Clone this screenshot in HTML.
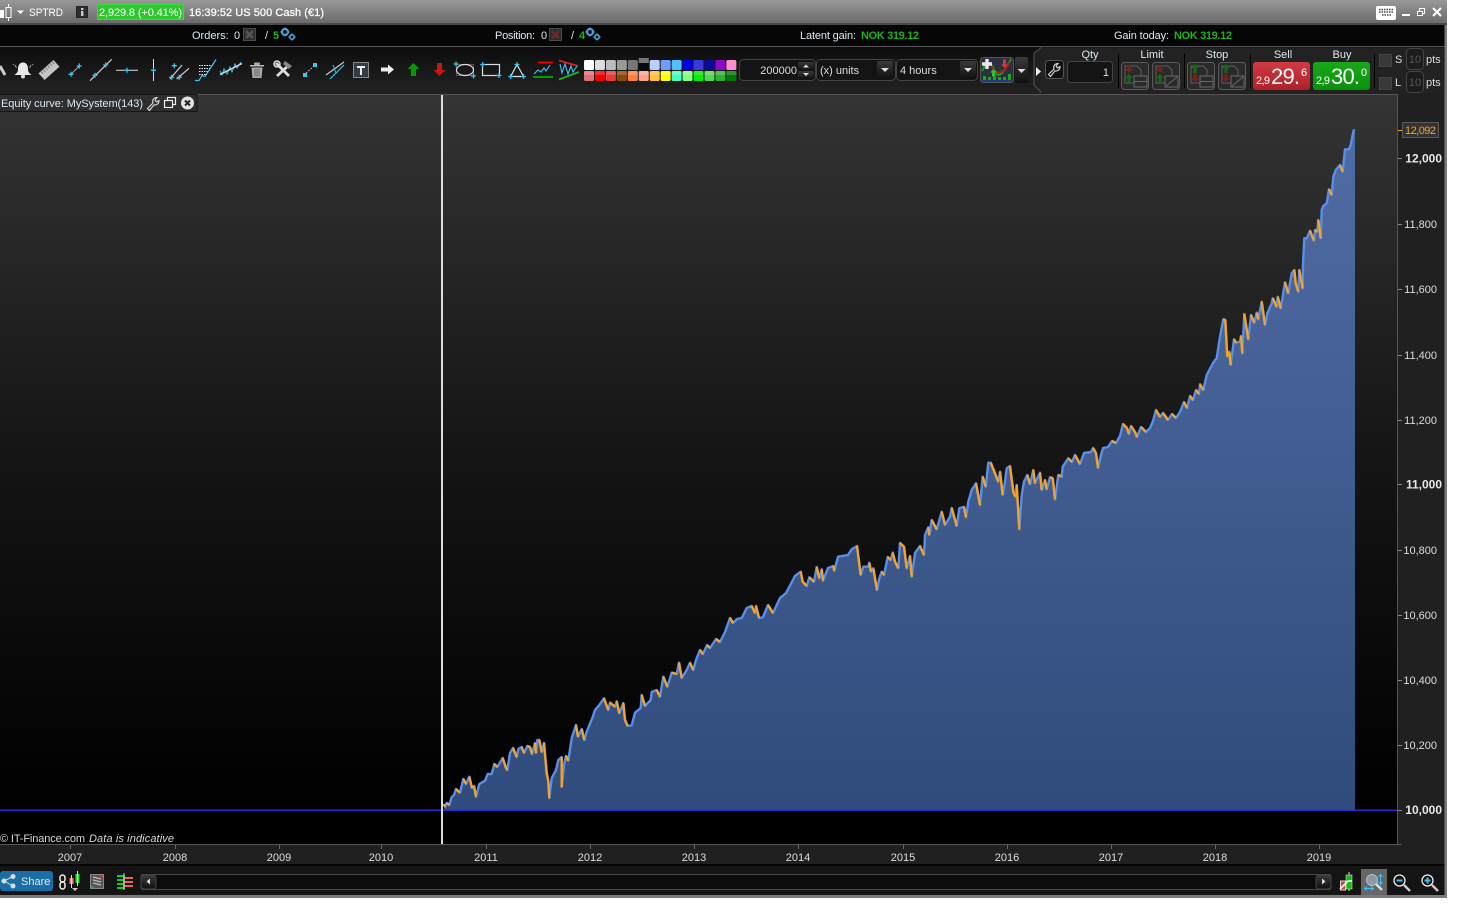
<!DOCTYPE html>
<html><head><meta charset="utf-8"><title>Equity curve</title>
<style>
html,body{margin:0;padding:0;background:#fff;width:1464px;height:920px;overflow:hidden}
svg{position:absolute;left:0;top:0;display:block}
text{font-family:"Liberation Sans",sans-serif;font-size:11px;fill:#ddd}
</style></head><body>
<svg width="1464" height="920" viewBox="0 0 1464 920" xmlns="http://www.w3.org/2000/svg">
<defs>
<linearGradient id="tb" x1="0" y1="0" x2="0" y2="1"><stop offset="0" stop-color="#989898"/><stop offset="1" stop-color="#6a6a6a"/></linearGradient>
<linearGradient id="tool" x1="0" y1="0" x2="0" y2="1"><stop offset="0" stop-color="#0c0c0c"/><stop offset=".5" stop-color="#181818"/><stop offset="1" stop-color="#222"/></linearGradient>
<linearGradient id="bg" x1="0" y1="0" x2="0" y2="1"><stop offset="0" stop-color="#343434"/><stop offset=".5" stop-color="#151515"/><stop offset="1" stop-color="#000"/></linearGradient>
<linearGradient id="fill" gradientUnits="userSpaceOnUse" x1="0" y1="129" x2="0" y2="810"><stop offset="0" stop-color="#506ca4"/><stop offset="1" stop-color="#304c7c"/></linearGradient>
<linearGradient id="btn" x1="0" y1="0" x2="0" y2="1"><stop offset="0" stop-color="#3a3a3a"/><stop offset="1" stop-color="#111"/></linearGradient>
<linearGradient id="sell" x1="0" y1="0" x2="0" y2="1"><stop offset="0" stop-color="#d03a44"/><stop offset="1" stop-color="#b02028"/></linearGradient>
<linearGradient id="buy" x1="0" y1="0" x2="0" y2="1"><stop offset="0" stop-color="#18a818"/><stop offset="1" stop-color="#0c900c"/></linearGradient>
<g id="p"><path d="M-2.5 0H2.5M0-2.5V2.5" stroke="#3cc4f4" stroke-width="1.3" fill="none"/></g>
<g id="gear" fill="none" stroke="#4aa0d8"><circle cx="4" cy="4" r="3" stroke-width="2.2"/><circle cx="11" cy="9" r="2.2" stroke-width="1.7"/><path d="M4-.5v1.500M4 7v1.500M-.5 4h1.500M7 4h1.500M11 5.500v1M11 11.500v1M7.500 9h1M13.500 9h1" stroke-width="1.500"/></g>
<g id="xb"><rect x=".5" y=".5" width="12" height="12" fill="#2c2c2c" stroke="#4a4a4a"/><path d="M3 3l7 7M10 3l-7 7" stroke="#555" stroke-width="2.800"/></g>
<g id="xr"><rect x=".5" y=".5" width="12" height="12" fill="#2c2c2c" stroke="#4a4a4a"/><path d="M3 3l7 7M10 3l-7 7" stroke="#6a2828" stroke-width="2.800"/></g>
<g id="wr"><path d="M1.5 12.5L7 7c-1-2.500 .5-5.500 4-5.500l-2 2.500 1.500 2 2.500-1.500c.3 3-2.500 5-5 4.300L3.500 14.500z" fill="none" stroke="#ddd" stroke-width="1.100"/></g>
<g id="ob"><rect x=".5" y=".5" width="27" height="27" rx="3" fill="#2a2a2a" stroke="#5a5a5a"/><path d="M4 4h12l4 4v13H4z" fill="#2a2a2a" stroke="#5e5e5e"/><rect x="13" y="14" width="13" height="11" fill="#2a2a2a" stroke="#6a6a6a"/></g>
</defs>

<!-- frame -->
<rect x="0" y="0" width="1447" height="898" fill="#7a7a7a"/>
<rect x="0" y="0" width="1447" height="23" fill="url(#tb)"/>
<rect x="0" y="23" width="1447" height="2" fill="#4a4a4a"/>
<rect x="0" y="25" width="1444.500" height="21" fill="#060606"/>
<rect x="0" y="46" width="1444.500" height="1" fill="#555"/>
<rect x="0" y="47" width="1444.500" height="47" fill="url(#tool)"/>
<rect x="0" y="94" width="1444.500" height="801" fill="#202020"/>

<!-- title bar -->
<rect x="0" y="10" width="4" height="8" fill="#fff"/><rect x="6" y="7.500" width="5" height="10" fill="none" stroke="#fff"/><path d="M8.500 4v3M8.500 18v3" stroke="#fff"/>
<path d="M17 10.500h7l-3.500 3.500z" fill="#fff"/>
<text x="29" y="16" style="fill:#fff" textLength="34" lengthAdjust="spacingAndGlyphs">SPTRD</text>
<rect x="76.500" y="6.500" width="11" height="11" fill="#2c2c34" stroke="#222"/><rect x="81" y="8" width="2.400" height="2" fill="#ccc"/><rect x="81" y="11" width="2.400" height="5" fill="#ccc"/>
<rect x="97.500" y="4.500" width="86" height="15" fill="#2ec82e" stroke="#3ddc3d"/>
<text x="99" y="16" style="fill:#fff" textLength="83">2,929.8 (+0.41%)</text>
<text x="189" y="16" style="fill:#fff;stroke:#fff;stroke-width:.25" textLength="135">16:39:52 US 500 Cash (€1)</text>
<rect x="1376" y="6" width="20" height="14" rx="2" fill="#fff"/><path d="M1379 9.500h14M1379 12h14M1382 15h9" stroke="#444" stroke-width="1.400" stroke-dasharray="1.500 1"/>
<rect x="1402" y="14" width="8" height="2" fill="#fff"/>
<rect x="1419.500" y="8.500" width="5" height="5" fill="none" stroke="#fff"/><rect x="1417.500" y="11.500" width="5" height="4" fill="#777" stroke="#fff"/>
<path d="M1433 8l8 8M1441 8l-8 8" stroke="#fff" stroke-width="2"/>

<!-- status row -->
<text x="192" y="39" style="fill:#d8e8f4">Orders:</text><text x="234" y="39" style="fill:#d8e8f4">0</text>
<use href="#xb" x="243" y="28"/>
<text x="265" y="39" style="fill:#d8e8f4">/</text><text x="273" y="39" style="fill:#1eb01e;font-weight:bold">5</text><use href="#gear" x="281" y="28"/>
<text x="495" y="39" style="fill:#d8e8f4" textLength="40">Position:</text><text x="541" y="39" style="fill:#d8e8f4">0</text>
<use href="#xr" x="549" y="28"/>
<text x="571" y="39" style="fill:#d8e8f4">/</text><text x="579" y="39" style="fill:#1eb01e;font-weight:bold">4</text><use href="#gear" x="586" y="28"/>
<text x="800" y="39" style="fill:#d8e8f4" textLength="56">Latent gain:</text><text x="861" y="39" style="fill:#1eb01e;font-weight:bold" textLength="58">NOK 319.12</text>
<text x="1114" y="39" style="fill:#d8e8f4" textLength="55">Gain today:</text><text x="1174" y="39" style="fill:#1eb01e;font-weight:bold" textLength="58">NOK 319.12</text>

<!-- drawing tools -->
<path d="M0 66L5 75" stroke="#ccc" stroke-width="3"/>
<path d="M23 62.500c-3.500 0-5 3-5 6.500 0 3-1 4-3.500 6h17c-2.500-2-3.500-3-3.500-6 0-3.500-1.500-6.500-5-6.500z" fill="#e8e8e8"/><circle cx="23" cy="76.500" r="2" fill="#ddd"/><path d="M15 65l1.500 3M13 64l1 1M31 65l-1.500 3M33 64l-1 1" stroke="#999"/>
<g transform="rotate(-42 49 70)"><rect x="39" y="65.500" width="20" height="9" fill="#c4c4c4"/><path d="M42 66v3M45 66v3M48 66v3M51 66v3M54 66v3M57 66v3" stroke="#777"/></g>
<path d="M71 74.300L79.300 66" stroke="#aaa"/><use href="#p" x="71" y="74.300"/><use href="#p" x="79.300" y="66"/>
<path d="M90 80.700L111.700 59.300" stroke="#ccc" stroke-width="1.200"/><use href="#p" x="95" y="75.300"/><use href="#p" x="105.700" y="65"/>
<path d="M116 70.300H138" stroke="#ddd"/><use href="#p" x="127" y="70.300"/>
<path d="M153.500 59V81" stroke="#ddd"/><use href="#p" x="153.500" y="70.300"/>
<path d="M170 79L182 65M176.700 79L189 68.300" stroke="#ccc" stroke-width="1.200"/><use href="#p" x="174.300" y="65.700"/><use href="#p" x="171.700" y="77.300"/><use href="#p" x="179.300" y="77.300"/>
<path d="M199 65.500h14M199 68.500h12M199 71.500h10M199 74.500h8" stroke="#eee" stroke-dasharray="1.500 1"/><path d="M195 80.500h4l3-5 3 1 11-17" stroke="#3cc4f4" fill="none" stroke-width="1.200"/>
<path d="M220 71l2 4 2-6 3 5 3-7 2 5 3-8 2 4 4-6" stroke="#3cc4f4" fill="none" stroke-width="1"/><path d="M220 74.500L242 63.500" stroke="#ddd" stroke-width="1.300"/>
<path d="M250 65h14v1.500h-14z" fill="#bbb"/><rect x="254" y="62.500" width="6" height="2.500" rx="1" fill="#aaa"/><path d="M251.500 67.500h11l-1 10.500h-9z" fill="#aaa"/><path d="M255 69v7.500M257 69v7.500M259 69v7.500" stroke="#666"/>
<path d="M276 63l13 13M289 65l-12 11" stroke="#ddd" stroke-width="2.800"/><path d="M285 61l7 5-3 3-6-5z" fill="#888"/><circle cx="277" cy="64" r="3" fill="none" stroke="#ddd" stroke-width="1.600"/>
<path d="M304 75L315 65" stroke="#ccc" stroke-dasharray="1.500 1.500"/><rect x="303" y="73" width="4" height="4" fill="#3cc4f4"/><rect x="313" y="63" width="4" height="4" fill="#3cc4f4"/>
<path d="M326 75L344 62" stroke="#ccc" stroke-width="1.200"/><path d="M330 79L344 65" stroke="#3cc4f4" stroke-width="1.200"/><path d="M333 65l3 8" stroke="#3cc4f4"/>
<rect x="353.500" y="62.500" width="15" height="15" fill="#303c46" stroke="#8a8a8a"/><path d="M357 66h8v2h-3v7h-2v-7h-3z" fill="#eee"/>
<path d="M381 67.500h7v-3l6 5-6 5v-3h-7z" fill="#eee"/>
<path d="M413.500 63l6 6h-3.500v7h-5v-7h-3.500z" fill="#0a960a"/>
<path d="M439.500 76l-6-6h3.500v-7h5v7h3.500z" fill="#c01818"/>
<rect x="456.500" y="64.500" width="17" height="11" fill="none" stroke="#555"/><ellipse cx="465" cy="70" rx="8.500" ry="5.500" fill="none" stroke="#ddd" stroke-width="1.200"/><use href="#p" x="456" y="64"/><use href="#p" x="473.500" y="76"/>
<rect x="482.500" y="64.500" width="17" height="11" fill="none" stroke="#ddd" stroke-width="1.200"/><use href="#p" x="482.700" y="64.500"/><use href="#p" x="499" y="75.500"/>
<path d="M517 64.500L510.700 76.500H523.500Z" fill="none" stroke="#ddd" stroke-width="1.200"/><use href="#p" x="517" y="64.500"/><use href="#p" x="510.700" y="76.500"/><use href="#p" x="523.500" y="76.500"/>
<path d="M538 62.500h15" stroke="#f00000" stroke-width="1.800"/><path d="M533 77h20" stroke="#00b000" stroke-width="1.800"/><path d="M534 74l4-4 3 2 3-4 2 3 4-6" stroke="#3cc4f4" fill="none" stroke-width="1.100"/>
<path d="M559 60.500L578 66" stroke="#e81818" stroke-width="1.800"/><path d="M559 79.500L579 72" stroke="#20b020" stroke-width="1.800"/><path d="M560 64l2 9 3-9 3 10 3-8 2 6 4-6" stroke="#3cc4f4" fill="none" stroke-width="1.100"/>

<!-- swatches -->
<g id="sw"></g>

<!-- inputs -->
<rect x="739.500" y="59.500" width="76" height="21" rx="4" fill="#141414" stroke="#444"/>
<text x="797" y="74" text-anchor="end">200000</text>
<rect x="798" y="62" width="16" height="8" rx="2" fill="url(#btn)"/><rect x="798" y="71" width="16" height="8" rx="2" fill="url(#btn)"/>
<path d="M803 67.500l3-3 3 3zM803 73l3 3 3-3z" fill="#ddd"/>
<rect x="816.500" y="59.500" width="79" height="21" rx="4" fill="#141414" stroke="#444"/>
<text x="820" y="74">(x) units</text>
<rect x="877" y="61" width="16" height="17" rx="2" fill="url(#btn)"/><path d="M881 68h8l-4 4z" fill="#ddd"/>
<rect x="896.500" y="59.500" width="81" height="21" rx="4" fill="#141414" stroke="#444"/>
<text x="900" y="74">4 hours</text>
<rect x="960" y="61" width="16" height="17" rx="2" fill="url(#btn)"/><path d="M964 68h8l-4 4z" fill="#ddd"/>
<rect x="980.500" y="57.500" width="33" height="25" rx="3" fill="#2a3040" stroke="#555"/>
<path d="M982 71c5-10 9-10 12-1s8 6 17-11" fill="none" stroke="#18a018" stroke-width="2"/><path d="M990 62c4 14 12 14 20 0" fill="none" stroke="#a02020" stroke-width="2"/>
<path d="M982 64h10M987 59v10" stroke="#e8e8f0" stroke-width="3.400"/>
<path d="M993.500 69l3.500 3.500h-2v4h-3v-4h-2z" fill="#30c030"/><path d="M1004.500 68l-3.500-3.500h2v-5h3v5h2z" fill="#e03030"/>
<path d="M982 81h30" stroke="#2040d0"/><path d="M983 76h3v4h-3zM988 77h3v3h-3zM993 76h3v4h-3zM998 77h3v3h-3zM1003 77h3v3h-3zM1008 74h3v6h-3z" fill="#10b010"/>
<rect x="1015" y="57" width="13" height="26" rx="2" fill="url(#btn)"/><path d="M1017.500 69h8l-4 4z" fill="#ddd"/>

<!-- order panel -->
<path d="M1042 47l-8 6v32l8 8" fill="#202020" stroke="#555"/>
<rect x="1041" y="47.500" width="403" height="46" fill="#222"/>
<path d="M1036 67l5 4.500-5 4.500z" fill="#eee"/>
<rect x="1045.500" y="60.500" width="18" height="18" rx="3" fill="#111" stroke="#555"/><use href="#wr" x="1047" y="62"/>
<rect x="1067.500" y="61.500" width="45" height="21" rx="3" fill="#141414" stroke="#444"/>
<text x="1109" y="76" text-anchor="end">1</text>
<text x="1090" y="58" text-anchor="middle" style="fill:#d8e8f4">Qty</text>
<text x="1152" y="58" text-anchor="middle" style="fill:#d8e8f4">Limit</text>
<text x="1217" y="58" text-anchor="middle" style="fill:#d8e8f4">Stop</text>
<text x="1283" y="58" text-anchor="middle" style="fill:#d8e8f4">Sell</text>
<text x="1342" y="58" text-anchor="middle" style="fill:#d8e8f4">Buy</text>
<path d="M1118.500 54v34M1184.500 54v34M1250.500 54v34M1374.500 54v34" stroke="#000"/>
<g transform="translate(1121,62)"><use href="#ob"/><path d="M6.500 3h3v4h2.500l-4 4-4-4h2.500z" fill="#7a2020"/><path d="M8 12l4 4h-2.500v5h-3v-5h-2.500z" fill="#0f6f0f"/><path d="M13 19.500h13" stroke="#6a6a6a"/></g>
<g transform="translate(1152,62)"><use href="#ob"/><path d="M6.500 3h3v4h2.500l-4 4-4-4h2.500z" fill="#7a2020"/><path d="M8 12l4 4h-2.500v5h-3v-5h-2.500z" fill="#0f6f0f"/><path d="M14 24l11-9" stroke="#6a6a6a"/></g>
<g transform="translate(1187,62)"><use href="#ob"/><path d="M8 2l4 4h-2.500v5h-3v-5h-2.500z" fill="#0f6f0f"/><path d="M6.500 12h3v4h2.500l-4 4-4-4h2.500z" fill="#7a2020"/><path d="M13 19.500h13" stroke="#6a6a6a"/></g>
<g transform="translate(1218,62)"><use href="#ob"/><path d="M8 2l4 4h-2.500v5h-3v-5h-2.500z" fill="#0f6f0f"/><path d="M6.500 12h3v4h2.500l-4 4-4-4h2.500z" fill="#7a2020"/><path d="M14 24l11-9" stroke="#6a6a6a"/></g>
<rect x="1253" y="62" width="57" height="28" rx="3" fill="url(#sell)"/>
<text x="1256" y="84" style="fill:#fff;font-size:11px" textLength="14">2,9</text><text x="1271" y="84" style="fill:#fff;font-size:22px" textLength="29">29.</text><text x="1301" y="76" style="fill:#fff;font-size:11px">6</text>
<rect x="1313" y="62" width="57" height="28" rx="3" fill="url(#buy)"/>
<text x="1316" y="84" style="fill:#fff;font-size:11px" textLength="14">2,9</text><text x="1331" y="84" style="fill:#fff;font-size:22px" textLength="29">30.</text><text x="1361" y="76" style="fill:#fff;font-size:11px">0</text>
<rect x="1379.500" y="54.500" width="12" height="12" fill="#383838" stroke="#444"/>
<rect x="1379.500" y="77.500" width="12" height="12" fill="#383838" stroke="#444"/>
<text x="1395" y="63">S</text><text x="1395" y="86">L</text>
<rect x="1406.500" y="48.500" width="17" height="21" rx="4" fill="#1c1c1c" stroke="#444"/><rect x="1406.500" y="71.500" width="17" height="21" rx="4" fill="#1c1c1c" stroke="#444"/>
<text x="1415" y="63" text-anchor="middle" style="fill:#555">10</text><text x="1415" y="86" text-anchor="middle" style="fill:#555">10</text>
<text x="1426" y="63">pts</text><text x="1426" y="86">pts</text>

<!-- chart -->
<rect x="0" y="94" width="1398" height="1" fill="#555"/>
<rect x="0" y="95" width="1398" height="715" fill="url(#bg)"/>
<rect x="0" y="810" width="1398" height="34" fill="#000"/>
<path id="area" fill="url(#fill)"/>
<path id="bl" fill="none" stroke="#5a8ee8" stroke-width="2.400" stroke-linejoin="round"/>
<path id="or" fill="none" stroke="#f6a222" stroke-width="2.400" stroke-linecap="butt"/>
<rect x="0" y="809.500" width="1398" height="1.500" fill="#2a2ad4"/>
<rect x="441" y="95" width="2" height="749" fill="#dcdcdc"/>
<rect x="1397" y="94" width="1" height="751" fill="#555"/>
<rect x="0" y="844" width="1402" height="1" fill="#555"/>
<rect x="0" y="864" width="1444.500" height="2" fill="#050505"/>
<rect x="0" y="866" width="1444.500" height="29" fill="#141414"/>

<!-- equity tab -->
<rect x="-1" y="94.500" width="198" height="17" fill="#2e2e2e" stroke="#161616"/>
<text x="1" y="107" style="fill:#d8e8f4" textLength="142">Equity curve: MySystem(143)</text>
<use href="#wr" x="146" y="96"/>
<rect x="167.500" y="97.500" width="8" height="7" fill="none" stroke="#eee" stroke-width="1.200"/><rect x="164.500" y="100.500" width="8" height="7" fill="#2e2e2e" stroke="#eee" stroke-width="1.200"/>
<circle cx="187.500" cy="103" r="6.500" fill="#e2e2e2"/><path d="M185 100.500l5 5M190 100.500l-5 5" stroke="#222" stroke-width="2"/>

<!-- y axis -->
<g id="yax"></g>
<rect x="1402.500" y="122.500" width="36" height="15" fill="#333" stroke="#5a5a5a"/>
<path d="M1398 130.500h4" stroke="#f6a222"/>
<text x="1405" y="134" style="fill:#f6a222" textLength="31">12,092</text>

<!-- time axis -->
<g id="xax"></g>
<text x="0" y="842" style="fill:#d8d8d8" textLength="85">© IT-Finance.com</text>
<text x="89" y="842" style="fill:#d8d8d8;font-style:italic" textLength="85">Data is indicative</text>

<!-- bottom bar -->
<rect x="0" y="871" width="53" height="20" rx="3" fill="#1a6ea6"/>
<circle cx="4" cy="881" r="2.500" fill="#ddd"/><circle cx="13" cy="876.500" r="2.500" fill="#ddd"/><circle cx="13" cy="886" r="2.500" fill="#ddd"/><path d="M13 876.500l-9 4.500 9 5" stroke="#ddd" fill="none"/>
<text x="21" y="885" style="fill:#e0e8f0">Share</text>
<rect x="60" y="875" width="5" height="7" rx="2.500" fill="none" stroke="#eee" stroke-width="1.500"/><rect x="60" y="882" width="5" height="7" rx="2.500" fill="none" stroke="#eee" stroke-width="1.500"/>
<rect x="69.500" y="878" width="4" height="6" fill="#f08080"/><path d="M71.500 875v13" stroke="#ddd"/><rect x="75.500" y="874" width="4" height="9" fill="#30e030"/><path d="M77.500 871v15" stroke="#ddd"/><path d="M72 888h6l-3 3z" fill="#ccc"/>
<rect x="90.500" y="874.500" width="13" height="14" fill="#555" stroke="#888"/><path d="M93 877l8 2M93 880l8 2M93 883l8 2" stroke="#bbb" stroke-width="1.200"/><path d="M98 875h5v3z" fill="#e03030"/><path d="M91 888v-3l4 3z" fill="#20b020"/>
<path d="M117 875h8v2h-8zM117 879h8v2h-8zM117 883h8v2h-8zM117 887h8v2h-8z" fill="#10d010"/><path d="M123 877h10v2h-10zM123 881h10v2h-10zM123 885h10v2h-10z" fill="#f06060"/><path d="M124 873v17" stroke="#ccc"/>
<rect x="141" y="874.500" width="1190" height="15" rx="2" fill="#0c0c0c" stroke="#4a4a4a"/>
<rect x="141" y="875" width="15" height="14" rx="3" fill="url(#btn)" stroke="#444"/><path d="M150 878.500v6l-3.500-3z" fill="#ddd"/>
<rect x="1316" y="875" width="15" height="14" rx="3" fill="url(#btn)" stroke="#444"/><path d="M1322 878.500v6l3.500-3z" fill="#ddd"/>
<rect x="1340.500" y="881" width="5" height="9" fill="#d04040" stroke="#ddd"/><rect x="1346" y="875" width="6" height="14" fill="#10c010" stroke="#ddd" stroke-width=".6"/><path d="M1340 889l8-8h4" stroke="#eee" stroke-width="1.800" fill="none"/><path d="M1349 872v3M1349 889v2" stroke="#ddd"/>
<rect x="1361" y="869" width="26" height="26" fill="#666"/>
<circle cx="1372" cy="880" r="5.500" fill="#8a98a8" stroke="#bbb"/><path d="M1376 884l6 6" stroke="#ddd" stroke-width="2.400"/><path d="M1380.500 875v9M1378.500 877l2-2.500 2 2.500M1378.500 882l2 2.500 2-2.500M1365 888.500h8M1367 886.500l-2.500 2 2.500 2M1371 886.500l2.500 2-2.500 2" stroke="#3cc4f4" fill="none"/>
<circle cx="1399.500" cy="880.500" r="5.500" fill="#111" stroke="#eee" stroke-width="1.300"/><path d="M1396.500 880.500h6" stroke="#3cc4f4" stroke-width="2"/><path d="M1404 885l6 6" stroke="#ccc" stroke-width="2.400"/>
<circle cx="1427.500" cy="880.500" r="5.500" fill="#111" stroke="#eee" stroke-width="1.300"/><path d="M1424.500 880.500h6M1427.500 877.500v6" stroke="#3cc4f4" stroke-width="2"/><path d="M1432 885l6 6" stroke="#ccc" stroke-width="2.400"/>
</svg>
<script>
var NS="http://www.w3.org/2000/svg";
function el(parent,tag,attrs,txt){var e=document.createElementNS(NS,tag);for(var k in attrs)e.setAttribute(k,attrs[k]);if(txt)e.textContent=txt;parent.appendChild(e);return e;}
var pts=[444,804,445,806.7,446.7,803,449.3,805,451.7,797,454,795,456,789,460,792.7,463.3,779,466,784,469.3,776.7,472,788,474,786,476,796.7,479.3,784,485,780.7,487.7,774,491.7,774,494.3,764,497.3,767,502.7,758,506,768,507.3,770,510,753,513,748,516.7,757,518.3,749,521.7,747,524,753,527.3,746,530,747,532,754,535,743,536,753,537.3,740,539.3,740,541.7,752,544,743,546.7,773,548.3,781,549.3,798,551.7,778,556,770,558.3,760,561.7,757,561.7,787,564,765,566,756,568.3,760.7,571.7,738,576,725,578,736.7,581.7,729,584.3,740,586.7,731.7,592.7,717,595,710,599.3,705,604,698.3,608.3,710,610,702.7,615,706.7,616.7,701.3,619.3,713.3,623.3,703,625,720,627.7,726,631.7,725.3,635,712.7,640.7,708,641.7,695,645,706,650.7,700,651.7,692,656.7,690,660,696.7,663.3,676.7,667.3,686.7,671.7,672.7,676.7,674,679,662.7,681.7,678,686.7,670,690,662.7,693.3,670,696,660,698,655,700,650,703,654,707,645,710,648,716,639,720,642,725,632,730,618,733,623,737,619,741.7,618,746.7,608,751.7,606,755,613,756,606,759,618,763,617,768,605,773,613,780,598,786,593,795,576,800.7,571.7,802.7,581.7,806.7,586,809.3,577.3,814,581.7,816.7,567,819.3,578.3,821.7,569.3,823,580.7,828,568,833.3,566,834.3,570.7,838,556.7,848,555,851.7,549.3,857,546,860.7,575,863.3,566.7,868.3,566.7,869.3,562.7,871,571.7,873.3,568.3,877,590,879.3,578.3,881.7,571.7,884,575,887.7,557,890.7,560,892.7,552.7,895,561.7,898.3,568.3,900,543,904,546.7,906.7,568.3,910,556,911.7,576.7,915,553,920,546,924,555,925,535,928.3,527.3,929.3,535,931.7,520,936.7,529.3,941.7,511.7,945,525,950,516.7,951.7,508,956.7,526,959.3,508.3,964,506.7,966,517.3,968.3,501.7,971.7,490,976,483.3,980,505,982.7,476.7,985.7,486.7,988.3,462.7,990.7,462.7,995,473.3,998.3,481.7,1000,471.7,1002.7,495,1005,481.7,1006.7,468.3,1010,466,1013.3,491.7,1015.3,496.7,1016.7,485,1019.3,529.3,1021.7,495,1024,481.7,1027.3,475,1030,484,1033.3,470,1035,483.3,1040,472.7,1041.7,490,1045,480,1046.7,489.3,1050,477.3,1052.7,478.3,1055,499.3,1058.3,475,1061.7,476.7,1062.7,466.7,1068.3,458.3,1072,462,1075,455,1080,464,1084,453,1091,452,1093,448,1096,453,1098,468,1101,455,1103,448,1108,447,1112,441,1116,443,1120,436,1123,424,1127,428,1129,434,1131,426,1135,432,1137,437,1141,427,1146,432,1150,428,1153,421,1156,410,1160,417,1163,413,1168,420,1172,414,1176,418,1180,412,1184,402,1187,408,1190,396,1193,400,1196,390,1199,394,1200,384.3,1203.3,390,1206.7,375,1213,363,1216.7,358,1220,336.7,1223.3,319.3,1225.3,320,1227.3,356.7,1229.3,351.7,1230.7,365,1234,339.3,1236,342.7,1240,341.7,1241,336,1242.3,353.3,1244.3,314,1248.3,339.3,1251,315,1254.3,322.7,1256.7,312.7,1258.3,319.3,1261.7,301.7,1265,325,1267.3,313.3,1271.7,303.3,1272.7,298.3,1276.7,306.7,1277.7,296.7,1280.7,308.3,1285,282.3,1288.3,293.3,1291.7,273.3,1294.3,270,1295.7,283.3,1298.3,291.7,1299.3,270,1302.7,288.3,1303,264,1304.3,238.3,1306.7,238.3,1310,230.7,1314,240.7,1315,230,1317.3,231.7,1318.3,220,1320.7,238.3,1321.7,210,1323.3,206,1326.7,203.3,1329,189.3,1331.7,195,1333.3,176.7,1335.7,170,1340,165,1342.7,171.7,1345,149.3,1349,149.3,1350.7,145,1352.3,136.7,1354,129.3];
var blue="",org="",area="M"+pts[0]+" 810";
for(var i=0;i<pts.length;i+=2){var x=pts[i],y=pts[i+1];area+="L"+x+" "+y;blue+=(i?"L":"M")+x+" "+y;if(i&&y>pts[i-1])org+="M"+pts[i-2]+" "+pts[i-1]+"L"+x+" "+y;}
area+="L1355 129.3L1355 810Z";
document.getElementById("area").setAttribute("d",area);
document.getElementById("bl").setAttribute("d",blue);
document.getElementById("or").setAttribute("d",org);
var sw=document.getElementById("sw");
var r1=["#fff","#ddd","#bbb","#999","#777","#111","#bbcfff","#6f9bff","#4fc0f8","#0000f0","#3a3ad8","#0a0a9f","#8a0acc","#ff8fcc"];
var r2=["#e07078","#f00000","#e83a3a","#8a4a08","#ff8040","#ffa090","#ffc040","#ffff00","#40ffc0","#80ff80","#00f000","#50d850","#30b030","#007a00"];
for(var j=0;j<14;j++){var sx=584+j*10.95;
 if(j==5){el(sw,"rect",{x:sx,y:58,width:10,height:13,rx:1.5,fill:"#0a0a0a"});el(sw,"rect",{x:sx,y:58,width:10,height:5,fill:"#777"});}
 else{el(sw,"rect",{x:sx,y:60,width:10,height:10,rx:1.5,fill:r1[j]});}
 el(sw,"rect",{x:sx,y:71,width:10,height:10,rx:1.5,fill:r2[j]});
 el(sw,"rect",{x:sx,y:71,width:10,height:4,fill:"#fff","fill-opacity":.18});
}
var ya=document.getElementById("yax");
[["12,000",158.5,1],["11,800",224,0],["11,600",289,0],["11,400",355,0],["11,200",420,0],["11,000",484.5,1],["10,800",550,0],["10,600",615,0],["10,400",680,0],["10,200",745,0],["10,000",810,1]].forEach(function(a){
 el(ya,"path",{d:"M1398 "+Math.floor(a[1])+".5h4",stroke:"#888"});
 var t=el(ya,"text",{x:a[2]?1442:1437,y:a[1]+4,"text-anchor":"end"},a[0]);
 if(a[2])t.setAttribute("style","font-size:12px;font-weight:bold;fill:#e8e8e8");
});
var xa=document.getElementById("xax");
[[2007,70],[2008,175],[2009,279],[2010,381],[2011,486],[2012,590],[2013,694],[2014,798],[2015,903],[2016,1007],[2017,1111],[2018,1215],[2019,1319]].forEach(function(a){
 el(xa,"path",{d:"M"+a[1]+".5 845v4",stroke:"#666"});
 el(xa,"text",{x:a[1],y:861,"text-anchor":"middle"},String(a[0]));
});
</script>
</body></html>
